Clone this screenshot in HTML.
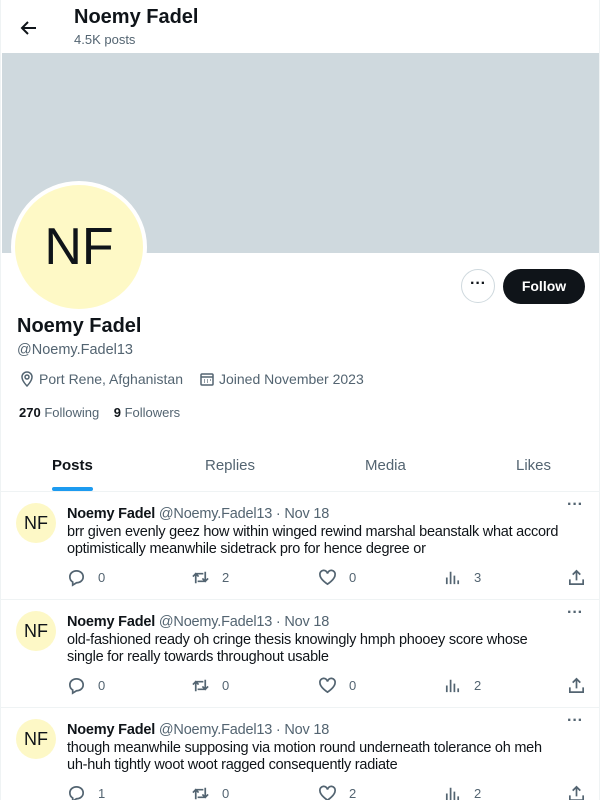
<!DOCTYPE html>
<html><head><meta charset="utf-8"><style>
*{margin:0;padding:0;box-sizing:border-box}
body{width:600px;height:800px;overflow:hidden;font-family:"Liberation Sans",sans-serif;color:#0f1419;background:#fff;position:relative}
.wrap{position:absolute;left:0;top:0;width:600px;height:800px;border-left:1px solid #eff3f4;border-right:1px solid #eff3f4;overflow:hidden}
.abs{position:absolute}
.grey{color:#536471}
.post{position:absolute;left:0;width:600px;height:108px;border-bottom:1px solid #eff3f4}
.av{position:absolute;left:15px;top:11px;width:40px;height:40px;border-radius:50%;background:#fdf8c6;font-size:18px;line-height:40px;text-align:center}
.ph{position:absolute;left:66px;top:14px;font-size:14.5px;white-space:nowrap;letter-spacing:-0.2px}
.pt{position:absolute;left:66px;top:32px;font-size:14.5px;line-height:17px;width:530px;letter-spacing:-0.25px;white-space:nowrap}
.act{position:absolute;top:76px;font-size:13px;color:#536471;display:flex;align-items:center;gap:12px}
.act svg{width:19px;height:19px;fill:none;stroke:#536471;stroke-width:1.8}
.dots{position:absolute;right:18px;top:4px;font-size:16px;color:#536471;font-weight:bold;letter-spacing:0px}
</style></head><body><div class="wrap">
<svg class="abs" style="left:18px;top:18px" width="20" height="20" viewBox="0 0 20 20"><path d="M17 10H3M9 4L3 10l6 6" fill="none" stroke="#0f1419" stroke-width="2"/></svg>
<div class="abs" style="left:73px;top:6px;font-size:20px;font-weight:bold">Noemy Fadel</div>
<div class="abs grey" style="left:73px;top:32px;font-size:13px">4.5K posts</div>
<div class="abs" style="left:1px;top:53px;width:598px;height:200px;background:#cfd9de"></div>
<div class="abs" style="left:10px;top:181px;width:136px;height:132px;border-radius:50%;background:#fef9c6;border:4px solid #fff;text-align:center;line-height:124px;font-size:52px">NF</div>
<div class="abs" style="left:460px;top:269px;width:34px;height:34px;border-radius:50%;border:1px solid #cfd9de;text-align:center;line-height:28px;font-size:16px;font-weight:bold">···</div>
<div class="abs" style="left:502px;top:269px;width:82px;height:35px;border-radius:18px;background:#0f1419;color:#fff;font-weight:bold;font-size:14px;text-align:center;line-height:35px">Follow</div>
<div class="abs" style="left:16px;top:315px;font-size:20px;font-weight:bold">Noemy Fadel</div>
<div class="abs grey" style="left:16px;top:342px;font-size:14.5px">@Noemy.Fadel13</div>
<svg class="abs" style="left:18px;top:371px" width="16" height="16" viewBox="0 0 16 16"><path d="M8 15s5-5 5-9a5 5 0 0 0-10 0c0 4 5 9 5 9z" fill="none" stroke="#536471" stroke-width="1.5"/><circle cx="8" cy="6" r="2" fill="none" stroke="#536471" stroke-width="1.5"/></svg>
<div class="abs grey" style="left:38px;top:371px;font-size:14px">Port Rene, Afghanistan</div>
<svg class="abs" style="left:198px;top:371px" width="16" height="16" viewBox="0 0 16 16"><rect x="2" y="3" width="12" height="11" rx="1" fill="none" stroke="#536471" stroke-width="1.5"/><path d="M2 6h12" stroke="#536471" stroke-width="1.5"/><path d="M5 9h1M8 9h1M11 9h1M5 11h1M8 11h1" stroke="#536471" stroke-width="1.3"/></svg>
<div class="abs grey" style="left:218px;top:371px;font-size:14px">Joined November 2023</div>
<div class="abs" style="left:18px;top:405px;font-size:13px"><b>270</b> <span class="grey">Following</span>&nbsp;&nbsp;&nbsp; <b>9</b> <span class="grey">Followers</span></div>
<div class="abs" style="left:51px;top:457px;font-size:15px;font-weight:bold">Posts</div>
<div class="abs" style="left:51px;top:487px;width:41px;height:4px;border-radius:2px;background:#1d9bf0"></div>
<div class="abs grey" style="left:204px;top:457px;font-size:15px">Replies</div>
<div class="abs grey" style="left:364px;top:457px;font-size:15px">Media</div>
<div class="abs grey" style="left:515px;top:457px;font-size:15px">Likes</div>
<div class="abs" style="left:0;top:491px;width:600px;height:1px;background:#eff3f4"></div>

<div class="post" style="top:492px">
<div class="av">NF</div><div class="dots">···</div>
<div class="ph"><b>Noemy Fadel</b> <span class="grey">@Noemy.Fadel13 · Nov 18</span></div>
<div class="pt">brr given evenly geez how within winged rewind marshal beanstalk what accord<br>optimistically meanwhile sidetrack pro for hence degree or</div>
<div class="act" style="left:66px"><svg viewBox="0 0 20 20"><path d="M10 3c4 0 7 2.7 7 6.3S14 15.5 10 15.5l-4 2.5v-3.3C4 13.5 3 11.5 3 9.3 3 5.7 6 3 10 3z"/></svg>0</div>
<div class="act" style="left:190px"><svg viewBox="0 0 20 20"><path d="M5 16V6h8M2 9l3-3 3 3M15 4v10H7M18 11l-3 3-3-3"/></svg>2</div>
<div class="act" style="left:317px"><svg viewBox="0 0 20 20"><path d="M10 17S2 12 2 7a4 4 0 0 1 8-1 4 4 0 0 1 8 1c0 5-8 10-8 10z"/></svg>0</div>
<div class="act" style="left:442px"><svg viewBox="0 0 20 20"><path d="M4 17V10M8 17V4M12 17V8M16 17v-4"/></svg>3</div>
<div class="act" style="left:566px"><svg viewBox="0 0 20 20"><path d="M10 13V3M6 7l4-4 4 4M3 12v5h14v-5"/></svg></div>
</div>

<div class="post" style="top:600px">
<div class="av">NF</div><div class="dots">···</div>
<div class="ph"><b>Noemy Fadel</b> <span class="grey">@Noemy.Fadel13 · Nov 18</span></div>
<div class="pt">old-fashioned ready oh cringe thesis knowingly hmph phooey score whose<br>single for really towards throughout usable</div>
<div class="act" style="left:66px"><svg viewBox="0 0 20 20"><path d="M10 3c4 0 7 2.7 7 6.3S14 15.5 10 15.5l-4 2.5v-3.3C4 13.5 3 11.5 3 9.3 3 5.7 6 3 10 3z"/></svg>0</div>
<div class="act" style="left:190px"><svg viewBox="0 0 20 20"><path d="M5 16V6h8M2 9l3-3 3 3M15 4v10H7M18 11l-3 3-3-3"/></svg>0</div>
<div class="act" style="left:317px"><svg viewBox="0 0 20 20"><path d="M10 17S2 12 2 7a4 4 0 0 1 8-1 4 4 0 0 1 8 1c0 5-8 10-8 10z"/></svg>0</div>
<div class="act" style="left:442px"><svg viewBox="0 0 20 20"><path d="M4 17V10M8 17V4M12 17V8M16 17v-4"/></svg>2</div>
<div class="act" style="left:566px"><svg viewBox="0 0 20 20"><path d="M10 13V3M6 7l4-4 4 4M3 12v5h14v-5"/></svg></div>
</div>

<div class="post" style="top:708px">
<div class="av">NF</div><div class="dots">···</div>
<div class="ph"><b>Noemy Fadel</b> <span class="grey">@Noemy.Fadel13 · Nov 18</span></div>
<div class="pt">though meanwhile supposing via motion round underneath tolerance oh meh<br>uh-huh tightly woot woot ragged consequently radiate</div>
<div class="act" style="left:66px"><svg viewBox="0 0 20 20"><path d="M10 3c4 0 7 2.7 7 6.3S14 15.5 10 15.5l-4 2.5v-3.3C4 13.5 3 11.5 3 9.3 3 5.7 6 3 10 3z"/></svg>1</div>
<div class="act" style="left:190px"><svg viewBox="0 0 20 20"><path d="M5 16V6h8M2 9l3-3 3 3M15 4v10H7M18 11l-3 3-3-3"/></svg>0</div>
<div class="act" style="left:317px"><svg viewBox="0 0 20 20"><path d="M10 17S2 12 2 7a4 4 0 0 1 8-1 4 4 0 0 1 8 1c0 5-8 10-8 10z"/></svg>2</div>
<div class="act" style="left:442px"><svg viewBox="0 0 20 20"><path d="M4 17V10M8 17V4M12 17V8M16 17v-4"/></svg>2</div>
<div class="act" style="left:566px"><svg viewBox="0 0 20 20"><path d="M10 13V3M6 7l4-4 4 4M3 12v5h14v-5"/></svg></div>
</div>
</div></body></html>
